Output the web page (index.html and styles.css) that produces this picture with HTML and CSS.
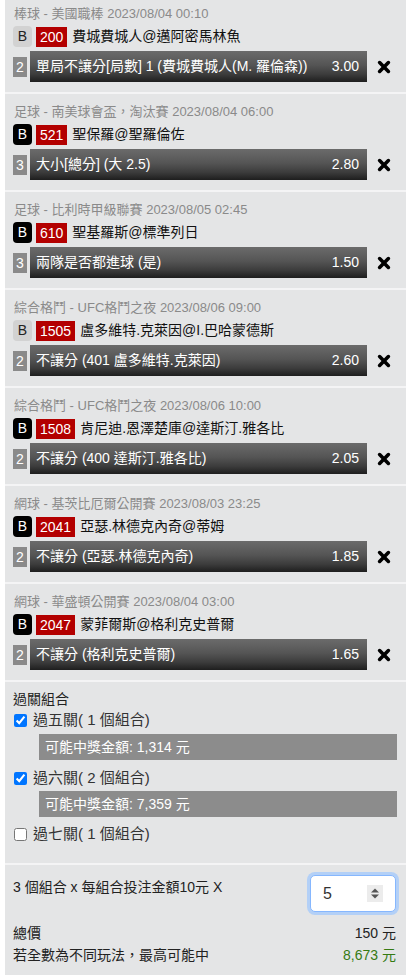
FILE: index.html
```html
<!DOCTYPE html>
<html lang="zh-Hant">
<head>
<meta charset="utf-8">
<title>過關投注</title>
<link rel="stylesheet" href="styles.css">
</head>
<body>
<div class="slip">
  <div class="bet first">
    <div class="meta">棒球 - 美國職棒 2023/08/04 00:10</div>
    <div class="match"><span class="tag tag-light">B</span><span class="code">200</span><span class="teams">費城費城人@邁阿密馬林魚</span></div>
    <div class="pick"><span class="num">2</span><div class="bar"><span class="sel">單局不讓分[局數] 1 (費城費城人(M. 羅倫森))</span><span class="odds">3.00</span></div><span class="del"><svg width="14" height="14" viewBox="0 0 14 14"><path d="M2.6 2.6L11.4 11.4M11.4 2.6L2.6 11.4" stroke="#000" stroke-width="3.6" stroke-linecap="round"/></svg></span></div>
  </div>
  <div class="bet">
    <div class="meta">足球 - 南美球會盃，淘汰賽 2023/08/04 06:00</div>
    <div class="match"><span class="tag tag-dark">B</span><span class="code">521</span><span class="teams">聖保羅@聖羅倫佐</span></div>
    <div class="pick"><span class="num">3</span><div class="bar"><span class="sel">大小[總分] (大 2.5)</span><span class="odds">2.80</span></div><span class="del"><svg width="14" height="14" viewBox="0 0 14 14"><path d="M2.6 2.6L11.4 11.4M11.4 2.6L2.6 11.4" stroke="#000" stroke-width="3.6" stroke-linecap="round"/></svg></span></div>
  </div>
  <div class="bet">
    <div class="meta">足球 - 比利時甲級聯賽 2023/08/05 02:45</div>
    <div class="match"><span class="tag tag-dark">B</span><span class="code">610</span><span class="teams">聖基羅斯@標準列日</span></div>
    <div class="pick"><span class="num">3</span><div class="bar"><span class="sel">兩隊是否都進球 (是)</span><span class="odds">1.50</span></div><span class="del"><svg width="14" height="14" viewBox="0 0 14 14"><path d="M2.6 2.6L11.4 11.4M11.4 2.6L2.6 11.4" stroke="#000" stroke-width="3.6" stroke-linecap="round"/></svg></span></div>
  </div>
  <div class="bet">
    <div class="meta">綜合格鬥 - UFC格鬥之夜 2023/08/06 09:00</div>
    <div class="match"><span class="tag tag-light">B</span><span class="code">1505</span><span class="teams">盧多維特.克萊因@I.巴哈蒙德斯</span></div>
    <div class="pick"><span class="num">2</span><div class="bar"><span class="sel">不讓分 (401 盧多維特.克萊因)</span><span class="odds">2.60</span></div><span class="del"><svg width="14" height="14" viewBox="0 0 14 14"><path d="M2.6 2.6L11.4 11.4M11.4 2.6L2.6 11.4" stroke="#000" stroke-width="3.6" stroke-linecap="round"/></svg></span></div>
  </div>
  <div class="bet">
    <div class="meta">綜合格鬥 - UFC格鬥之夜 2023/08/06 10:00</div>
    <div class="match"><span class="tag tag-dark">B</span><span class="code">1508</span><span class="teams">肯尼迪.恩澤楚庫@達斯汀.雅各比</span></div>
    <div class="pick"><span class="num">2</span><div class="bar"><span class="sel">不讓分 (400 達斯汀.雅各比)</span><span class="odds">2.05</span></div><span class="del"><svg width="14" height="14" viewBox="0 0 14 14"><path d="M2.6 2.6L11.4 11.4M11.4 2.6L2.6 11.4" stroke="#000" stroke-width="3.6" stroke-linecap="round"/></svg></span></div>
  </div>
  <div class="bet">
    <div class="meta">網球 - 基茨比厄爾公開賽 2023/08/03 23:25</div>
    <div class="match"><span class="tag tag-dark">B</span><span class="code">2041</span><span class="teams">亞瑟.林德克內奇@蒂姆</span></div>
    <div class="pick"><span class="num">2</span><div class="bar"><span class="sel">不讓分 (亞瑟.林德克內奇)</span><span class="odds">1.85</span></div><span class="del"><svg width="14" height="14" viewBox="0 0 14 14"><path d="M2.6 2.6L11.4 11.4M11.4 2.6L2.6 11.4" stroke="#000" stroke-width="3.6" stroke-linecap="round"/></svg></span></div>
  </div>
  <div class="bet">
    <div class="meta">網球 - 華盛頓公開賽 2023/08/04 03:00</div>
    <div class="match"><span class="tag tag-dark">B</span><span class="code">2047</span><span class="teams">蒙菲爾斯@格利克史普爾</span></div>
    <div class="pick"><span class="num">2</span><div class="bar"><span class="sel">不讓分 (格利克史普爾)</span><span class="odds">1.65</span></div><span class="del"><svg width="14" height="14" viewBox="0 0 14 14"><path d="M2.6 2.6L11.4 11.4M11.4 2.6L2.6 11.4" stroke="#000" stroke-width="3.6" stroke-linecap="round"/></svg></span></div>
  </div>

  <div class="parlay">
    <div class="parlay-title">過關組合</div>
    <label class="opt"><input type="checkbox" checked><span>過五關( 1 個組合)</span></label>
    <div class="win">可能中獎金額: 1,314 元</div>
    <label class="opt opt2"><input type="checkbox" checked><span>過六關( 2 個組合)</span></label>
    <div class="win win2">可能中獎金額: 7,359 元</div>
    <label class="opt opt3"><input type="checkbox"><span>過七關( 1 個組合)</span></label>
  </div>

  <div class="summary">
    <div class="stake-row">
      <span class="stake-text">3 個組合 x 每組合投注金額10元 X</span>
      <div class="qty"><span class="qty-val">5</span><svg class="spin" width="16" height="17" viewBox="0 0 16 17"><rect width="16" height="17" fill="#ececec"/><path d="M4 7.5L8 3.5L12 7.5Z" fill="#555"/><path d="M4 9.5L8 13.5L12 9.5Z" fill="#555"/></svg></div>
    </div>
    <div class="line line-first"><span>總價</span><span>150 元</span></div>
    <div class="line"><span>若全數為不同玩法，最高可能中</span><span class="green">8,673 元</span></div>
  </div>
</div>
</body>
</html>
```
FILE: styles.css
```css
html, body {
  background: #fff;
}
body {
  margin: 0 5px;
  font-family: "Liberation Sans", "Noto Sans CJK TC", sans-serif;
  font-size: 14px;
  color: #222;
}
.slip {
  background: #e4e5e6;
}
.bet {
  padding: 9px 5px 10px 8px;
  border-bottom: 2px solid #f4f4f5;
}
.bet.first {
  padding-top: 5px;
}
.meta {
  font-size: 13px;
  line-height: 18px;
  height: 18px;
  color: #8a8a8a;
  padding-left: 1px;
  white-space: nowrap;
}
.match {
  display: flex;
  align-items: center;
  margin-top: 3px;
  height: 21px;
}
.tag {
  width: 19px;
  height: 21px;
  border-radius: 4px;
  display: flex;
  align-items: center;
  justify-content: center;
  font-size: 14px;
  line-height: 21px;
}
.tag-light {
  background: #d2d2d2;
  color: #222;
}
.tag-dark {
  background: #000;
  color: #fff;
}
.code {
  margin-left: 4px;
  background: #b30000;
  color: #fff;
  height: 20px;
  line-height: 20px;
  padding: 0 4px;
}
.teams {
  margin-left: 5px;
  color: #111;
  line-height: 21px;
  white-space: nowrap;
}
.pick {
  display: flex;
  align-items: center;
  margin-top: 4px;
  height: 31px;
}
.num {
  width: 14px;
  height: 20px;
  line-height: 20px;
  background: #8a8a8a;
  color: #fff;
  text-align: center;
}
.bar {
  margin-left: 3px;
  flex: 1;
  height: 31px;
  display: flex;
  align-items: center;
  justify-content: space-between;
  padding: 0 8px 0 6px;
  background: linear-gradient(to bottom, #6b6b6b 0%, #555 45%, #3c3c3c 75%, #1e1e1e 100%);
  color: #fff;
  white-space: nowrap;
  line-height: 31px;
}
.del {
  width: 34px;
  height: 31px;
  display: flex;
  align-items: center;
  justify-content: center;
}
.parlay {
  padding: 8px 9px 18px 8px;
  border-bottom: 2px solid #f4f4f5;
}
.parlay-title {
  line-height: 18px;
  height: 18px;
  color: #222;
}
.opt {
  display: flex;
  align-items: center;
  height: 22px;
  margin-top: 1px;
  color: #333;
}
.opt input {
  width: 13px;
  height: 13px;
  margin: 0 0 0 1px;
}
.opt span {
  margin-left: 6px;
  line-height: 22px;
  font-size: 15px;
}
.opt2 {
  margin-top: 7px;
}
.opt3 {
  margin-top: 6px;
}
.win {
  margin: 3px 0 0 26px;
  height: 26px;
  line-height: 26px;
  background: #8c8c8c;
  color: #fff;
  padding-left: 6px;
}
.win2 {
  margin-top: 2px;
}
.summary {
  padding: 10px 10px 9px 8px;
}
.stake-row {
  display: flex;
  justify-content: space-between;
  align-items: flex-start;
}
.stake-text {
  margin-top: 1px;
  line-height: 22px;
}
.qty {
  width: 86px;
  height: 37px;
  box-sizing: border-box;
  background: #fff;
  border: 1px solid #86b7fe;
  border-radius: 5px;
  box-shadow: 0 0 0 3px #b3d0f7;
  display: flex;
  align-items: center;
  justify-content: space-between;
  padding: 0 12px 0 12px;
}
.qty-val {
  font-size: 16px;
  color: #333;
}
.line {
  display: flex;
  justify-content: space-between;
  line-height: 22px;
  height: 22px;
}
.line-first {
  margin-top: 10px;
}
.green {
  color: #357a12;
}
```
